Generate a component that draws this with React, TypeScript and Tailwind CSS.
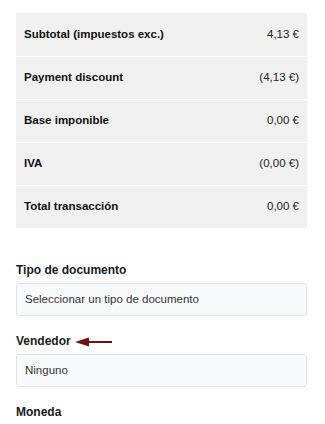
const rows = [
  { label: "Subtotal (impuestos exc.)", value: "4,13 €" },
  { label: "Payment discount", value: "(4,13 €)" },
  { label: "Base imponible", value: "0,00 €" },
  { label: "IVA", value: "(0,00 €)" },
  { label: "Total transacción", value: "0,00 €" },
];

function Field({ label, value, arrow }: { label: string; value?: string; arrow?: boolean }) {
  return (
    <div>
      <div className="flex h-[14px] items-center gap-[4px]">
        <span className="text-[12px] font-bold text-[#1a1a1a]">{label}</span>
        {arrow ? (
          <svg width="38" height="10" viewBox="0 0 38 10" className="mt-px">
            <path d="M12 4h25v2H12z" fill="#6e1014" />
            <path d="M0 5 14 0.5v9z" fill="#6e1014" />
          </svg>
        ) : null}
      </div>
      {value !== undefined ? (
        <div className="mt-[6px] flex h-[33px] items-center rounded-[3px] border border-[#e1e4e8] bg-[#f8f9fa] px-2 text-[11.5px] text-[#333]">
          {value}
        </div>
      ) : null}
    </div>
  );
}

export default function App() {
  return (
    <div className="h-[424px] w-[325px] overflow-hidden bg-white px-4 pt-[13px] font-['Liberation_Sans',Arial,sans-serif]">
      <div className="w-[291px] bg-[#f0f0f0]">
        {rows.map((row, i) => (
          <div
            key={row.label}
            className={`flex h-[43px] items-center justify-between px-2 text-[11.5px] ${
              i > 0 ? "border-t border-white" : ""
            }`}
          >
            <span className="font-bold text-[#111]">{row.label}</span>
            <span className="text-[#222]">{row.value}</span>
          </div>
        ))}
      </div>

      <div className="mt-[35px] flex w-[291px] flex-col gap-[18px]">
        <Field label="Tipo de documento" value="Seleccionar un tipo de documento" />
        <Field label="Vendedor" value="Ninguno" arrow />
        <Field label="Moneda" />
      </div>
    </div>
  );
}
